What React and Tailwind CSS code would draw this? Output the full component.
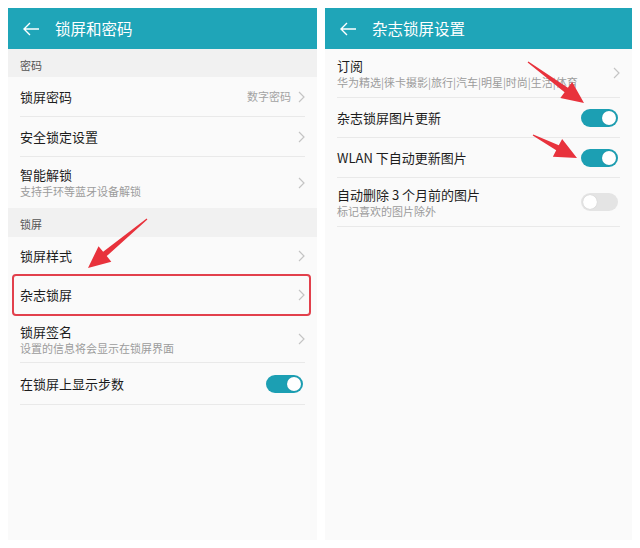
const font = { fontFamily: '"Noto Sans CJK SC", "Noto Sans", sans-serif' };

const Chevron = () => (
  <svg width="7" height="12" viewBox="0 0 7 12" className="shrink-0">
    <polyline points="1,1 6,6 1,11" fill="none" stroke="#c4c4c4" strokeWidth="1.2" />
  </svg>
);

const Toggle = ({ on }) => (
  <div
    className={`mr-[2px] flex h-[18px] w-[37px] shrink-0 items-center rounded-full px-[2px] ${
      on ? "justify-end bg-[#1c9fb3]" : "justify-start bg-[#e4e4e4]"
    }`}
  >
    <div className="h-[14px] w-[14px] rounded-full bg-white shadow-[0_0_1px_rgba(0,0,0,0.2)]" />
  </div>
);

const Header = ({ title }) => (
  <div className="flex h-[41px] items-center bg-[#1fa5b8] pl-[14px]">
    <svg width="18" height="14" viewBox="0 0 18 14">
      <path d="M17 7H2M8 1L2 7l6 6" fill="none" stroke="#fff" strokeWidth="1.4" />
    </svg>
    <span className="ml-[15px] text-[15.5px] text-white">{title}</span>
  </div>
);

const Section = ({ label, h }) => (
  <div className={`flex items-center bg-[#f1f1f1] pl-3 pt-1 text-[11px] text-[#555] ${h}`}>{label}</div>
);

// 单行或带副标题的设置项
const Row = ({ title, sub, value, right, h, line = true }) => (
  <div className={`mx-3 flex items-center ${h} ${line ? "border-b border-[#e9e9e9]" : ""}`}>
    <div className="flex flex-1 flex-col">
      <span className="text-[13px] leading-[17px] text-[#1d1d1d]">{title}</span>
      {sub && <span className="text-[11px] leading-[16px] text-[#9c9c9c]">{sub}</span>}
    </div>
    {value && <span className="mr-[7px] text-[11px] text-[#a3a3a3]">{value}</span>}
    {right ?? <Chevron />}
  </div>
);

const Arrow = ({ x1, y1, x2, y2 }) => {
  const dx = x2 - x1;
  const dy = y2 - y1;
  const len = Math.hypot(dx, dy);
  const ux = dx / len;
  const uy = dy / len;
  const px = -uy;
  const py = ux;
  const bx = x2 - ux * 22;
  const by = y2 - uy * 22;
  const hw = 10;
  const pts = [
    [x1 + px * 0.6, y1 + py * 0.6],
    [bx + px * 2.8, by + py * 2.8],
    [bx + px * hw, by + py * hw],
    [x2, y2],
    [bx - px * hw, by - py * hw],
    [bx - px * 2.8, by - py * 2.8],
    [x1 - px * 0.6, y1 - py * 0.6],
  ]
    .map((p) => p.join(","))
    .join(" ");
  return <polygon points={pts} fill="#e8323c" />;
};

export default function App() {
  return (
    <div className="relative h-[548px] w-[640px] bg-white" style={font}>
      <div className="flex gap-2 pl-2 pt-2">
        {/* 左：锁屏和密码 */}
        <div className="h-[532px] w-[309px] bg-[#fafafa]">
          <Header title="锁屏和密码" />
          <Section label="密码" h="h-[28px]" />
          <Row title="锁屏密码" value="数字密码" h="h-[40px]" />
          <Row title="安全锁定设置" h="h-[40px]" />
          <Row title="智能解锁" sub="支持手环等蓝牙设备解锁" h="h-[51px]" line={false} />
          <Section label="锁屏" h="h-[29px]" />
          <Row title="锁屏样式" h="h-[37px]" line={false} />
          <div className="ml-1 mr-[6px] flex h-[42px] items-center rounded-[4px] border-2 border-[#e2404c] pl-[6px] pr-[4px]">
            <span className="flex-1 text-[13px] text-[#1d1d1d]">杂志锁屏</span>
            <Chevron />
          </div>
          <Row title="锁屏签名" sub="设置的信息将会显示在锁屏界面" h="h-[47px]" />
          <Row title="在锁屏上显示步数" right={<Toggle on />} h="h-[42px]" />
        </div>

        {/* 右：杂志锁屏设置 */}
        <div className="h-[532px] w-[307px] bg-[#fafafa]">
          <Header title="杂志锁屏设置" />
          <Row title="订阅" sub="华为精选|徕卡摄影|旅行|汽车|明星|时尚|生活|体育" h="h-[49px]" />
          <Row title="杂志锁屏图片更新" right={<Toggle on />} h="h-[40px]" />
          <Row title="WLAN 下自动更新图片" right={<Toggle on />} h="h-[40px]" />
          <Row title="自动删除 3 个月前的图片" sub="标记喜欢的图片除外" right={<Toggle />} h="h-[49px]" />
        </div>
      </div>

      <svg className="pointer-events-none absolute left-0 top-0" width="640" height="548">
        <Arrow x1={147} y1={219} x2={88} y2={268} />
        <Arrow x1={528} y1={62} x2={584} y2={103} />
        <Arrow x1={533} y1={135} x2={577} y2={158} />
      </svg>
    </div>
  );
}
